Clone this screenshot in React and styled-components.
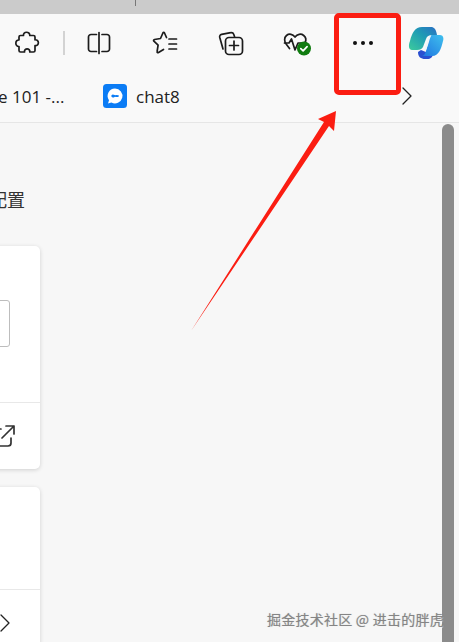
import React from 'react'
import styled, { createGlobalStyle } from 'styled-components'

const Global = createGlobalStyle`
  html, body { margin: 0; padding: 0; background: #f7f7f7; overflow: hidden; }
  body { font-family: 'Open Sans', 'Noto Sans CJK SC', sans-serif; }
`

const Page = styled.div`
  position: relative;
  width: 459px;
  height: 642px;
  overflow: hidden;
  display: flex;
  flex-direction: column;
`

const TopStrip = styled.div`
  height: 14px;
  flex: none;
  background: #cbcbcb;
  padding-left: 135px;
`

const Tick = styled.div`
  width: 1px;
  height: 6px;
  background: #777;
`

const Toolbar = styled.div`
  height: 64px;
  box-sizing: border-box;
  padding-bottom: 6px;
  flex: none;
  background: #f9f9f9;
  display: flex;
  align-items: center;
`

const ToolButton = styled.div`
  width: ${props => props.$w || 66}px;
  height: 100%;
  flex: none;
  display: flex;
  align-items: center;
  justify-content: center;
`

const Separator = styled.div`
  width: 2px;
  height: 24px;
  margin: 0 1px 0 9px;
  background: #d3d3d3;
`

const BookmarkBar = styled.div`
  height: 45px;
  box-sizing: border-box;
  padding-bottom: 8px;
  flex: none;
  background: #f9f9f9;
  border-bottom: 1px solid #e6e6e6;
  display: flex;
  align-items: center;
  font-size: 17px;
  color: #222;
`

const Bookmark = styled.div`
  display: flex;
  align-items: center;
  flex: none;
  gap: 9px;
  width: ${props => props.$w}px;
  margin-left: ${props => props.$ml}px;
  white-space: nowrap;
`

const More = styled.div`
  margin-left: 219px;
  display: flex;
`

const Content = styled.div`
  flex: 1;
  min-height: 0;
  display: flex;
  background: #f7f7f7;
`

const Column = styled.div`
  width: 442px;
  flex: none;
  overflow: hidden;
`

const Heading = styled.h2`
  margin: 64px 0 0 -11px;
  height: 59px;
  font: 400 18px/25px 'Noto Sans CJK SC', sans-serif;
  color: #333;
`

const Card = styled.section`
  width: 240px;
  margin: 0 0 18px -200px;
  background: #fff;
  border-radius: 5px;
  box-shadow: 0 1px 4px rgba(0, 0, 0, 0.16);
`

const CardBody = styled.div`
  height: ${props => props.$h}px;
  padding: 54px 30px 0 0;
  box-sizing: border-box;
`

const InputBox = styled.div`
  height: 47px;
  box-sizing: border-box;
  border: 1px solid #bdbdbd;
  border-radius: 3px;
`

const CardFooter = styled.div`
  height: 67px;
  border-top: 1px solid #e8e8e8;
  box-sizing: border-box;
  display: flex;
  align-items: center;
  justify-content: flex-end;
  padding-right: ${props => props.$pr}px;
`

const Scrollbar = styled.div`
  width: 12px;
  flex: none;
  margin-top: 1px;
  background: #8b8b8b;
  border-radius: 6px 6px 0 0;
`

const Highlight = styled.div`
  position: absolute;
  left: 334px;
  top: 13px;
  width: 67px;
  height: 82px;
  box-sizing: border-box;
  border: 5px solid #fb1d12;
  border-radius: 5px;
`

const Arrow = styled.svg`
  position: absolute;
  left: 0;
  top: 0;
`

const Watermark = styled.div`
  position: absolute;
  right: 15px;
  top: 609px;
  font: 400 14px/20px 'Noto Sans CJK SC', sans-serif;
  letter-spacing: 0.25px;
  color: #858585;
  white-space: nowrap;
  text-shadow: 0 0 1px rgba(120, 120, 120, 0.5), 0 1px 1px rgba(255, 255, 255, 0.8);
`

const stroke = { fill: 'none', stroke: '#1c1c1c', strokeWidth: 1.7, strokeLinecap: 'round', strokeLinejoin: 'round' }

const Puzzle = () => (
  <svg width="26" height="26" viewBox="0 0 26 26" {...stroke}>
    <path d="M9.500 5.500C8.800 1.300 16 1 15.800 5.500H19.500C20.500 5.500 21 6 21 7V9.800C25.500 9.200 25.500 16.200 21 15.600V20.500C21 21.500 20.500 22 19.500 22H15.800C16.300 17.800 10 17.800 10.500 22H6.500C5.500 22 5 21.500 5 20.500V16.500C.8 16.800 .8 9.600 5 10V7C5 6 5.500 5.500 6.500 5.500z" />
  </svg>
)

const Split = () => (
  <svg width="26" height="26" viewBox="0 0 26 26" {...stroke}>
    <path d="M10.500 4.500H5a2.500 2.500 0 0 0-2.500 2.500v12A2.500 2.500 0 0 0 5 21.500h5.500" />
    <path d="M16 4.500h5A2.500 2.500 0 0 1 23.500 7v12a2.500 2.500 0 0 1-2.500 2.500h-5" />
    <path d="M13 2.500v21" />
  </svg>
)

const Favorites = () => (
  <svg width="26" height="26" viewBox="0 0 26 26" {...stroke}>
    <path d="M14.500 7.500L12.500 3c-.4-.8-1.200-.8-1.600 0L8.500 8.500 2.500 9.500c-1 .2-1.200 1-.6 1.700l4.200 4-1 6.300c-.2 1 .6 1.500 1.400 1l5-3" />
    <path d="M17 9h7.500M17 14h7.500M17 19h7.500" />
  </svg>
)

const Collections = () => (
  <svg width="26" height="26" viewBox="0 0 26 26" {...stroke}>
    <path d="M16.500 6.500L15.700 4.300a2.500 2.500 0 0 0-3-1.600L3.600 4.300A2.500 2.500 0 0 0 1.700 7.300L5 19" />
    <rect x="7.500" y="7.500" width="17" height="17" rx="3.500" />
    <path d="M16 11v9M11.500 15.500h9" />
  </svg>
)

const Health = () => (
  <svg width="30" height="30" viewBox="0 0 30 30">
    <path {...stroke} d="M7.500 20.500L4.500 16.500C2 13.500 2 9.500 4.500 7.500c2.700-2.200 6.200-1.500 8.500 1.500 2.300-3 6-3.700 8.700-1.500 2 1.700 2.700 4.500 1.300 7" />
    <path {...stroke} d="M2.500 15h4.500l2.500-4 3.500 11 3-7h3" />
    <circle cx="22" cy="20.500" r="7" fill="#107c10" />
    <path d="M18.800 20.700l2.300 2.200 4-4.300" fill="none" stroke="#fff" strokeWidth="1.700" strokeLinecap="round" strokeLinejoin="round" />
  </svg>
)

const Dots = () => (
  <svg width="20" height="4" viewBox="0 0 20 4" fill="#111">
    <circle cx="2" cy="2" r="2" />
    <circle cx="10" cy="2" r="2" />
    <circle cx="18" cy="2" r="2" />
  </svg>
)

const Copilot = () => (
  <svg width="38" height="34" viewBox="0 0 38 34">
    <defs>
      <linearGradient id="cpA" x1="0" y1="1" x2="1" y2="0">
        <stop offset="0" stopColor="#3dcb9c" />
        <stop offset="0.55" stopColor="#1f9cb4" />
        <stop offset="1" stopColor="#2a6fc4" />
      </linearGradient>
      <linearGradient id="cpB" x1="0" y1="1" x2="1" y2="0">
        <stop offset="0" stopColor="#1f74e0" />
        <stop offset="1" stopColor="#3fc0ee" />
      </linearGradient>
    </defs>
    <path fill="#2a4fd0" d="M11 26C11 31 14 33 18 33H20C24 33 25 31 26 29L14 24z" />
    <path fill="url(#cpB)" d="M25 9H33C36 9 37 12 36 15C34 23 32 30 25 30H14C17 30 18 28 19 25L22 13C23 10 24 9 25 9z" />
    <path fill="url(#cpA)" d="M3 15C5 7 8 1 15 1H24C27 1 29 3 30 9H25C22 9 20 10 19 13L16 21C15 23 13 24 10 24H5C2 24 1 20 3 15z" />
    <path fill="#eef6fa" d="M23 10c-3 3-4 10-6 14h2c2-3 3-10 5-14z" />
  </svg>
)

const Chat8 = () => (
  <svg width="24" height="24" viewBox="0 0 24 24">
    <rect width="24" height="24" rx="3.500" fill="#0b7cf5" />
    <path fill="#fff" d="M12 4.500a7.500 7.500 0 1 1-3.600 14.100L5 19.500l1-3.200A7.500 7.500 0 0 1 12 4.500z" />
    <path d="M9 11.600c1-1 2 0 3 .4 1 .4 2 1 3-.4M9 12.400c1 1 2 0 3-.4 1-.4 2-1 3 .4" fill="none" stroke="#0b7cf5" strokeWidth="1.300" strokeLinecap="round" />
  </svg>
)

const Chevron = ({ w, h }) => (
  <svg width={w} height={h} viewBox="0 0 10 18" fill="none" stroke="#222" strokeWidth="1.300" strokeLinecap="round" strokeLinejoin="round">
    <path d="M1 1l8 8-8 8" />
  </svg>
)

const ExternalLink = () => (
  <svg width="24" height="24" viewBox="0 0 24 24" fill="none" stroke="#333" strokeWidth="1.700" strokeLinecap="round" strokeLinejoin="round">
    <path d="M10 5H4a3 3 0 0 0-3 3v11a3 3 0 0 0 3 3h13a3 3 0 0 0 3-3v-5" />
    <path d="M11 14L23 2M15 2h8v8" />
  </svg>
)

const App = () => (
  <Page>
    <Global />
    <TopStrip><Tick /></TopStrip>
    <Toolbar>
      <ToolButton $w={54}><Puzzle /></ToolButton>
      <Separator />
      <ToolButton><Split /></ToolButton>
      <ToolButton><Favorites /></ToolButton>
      <ToolButton><Collections /></ToolButton>
      <ToolButton><Health /></ToolButton>
      <ToolButton><Dots /></ToolButton>
      <ToolButton $w={60}><Copilot /></ToolButton>
    </Toolbar>
    <BookmarkBar>
      <Bookmark $w={105} $ml={-2}>e 101 -...</Bookmark>
      <Bookmark $w={80}><Chat8 />chat8</Bookmark>
      <More><Chevron w={10} h={18} /></More>
    </BookmarkBar>
    <Content>
      <Column>
        <Heading>配置</Heading>
        <Card>
          <CardBody $h={156}><InputBox /></CardBody>
          <CardFooter $pr={25}><ExternalLink /></CardFooter>
        </Card>
        <Card>
          <CardBody $h={102} />
          <CardFooter $pr={30}><Chevron w={10} h={18} /></CardFooter>
        </Card>
      </Column>
      <Scrollbar />
    </Content>
    <Highlight />
    <Arrow width="459" height="642" viewBox="0 0 459 642">
      <polygon fill="#fb1d12" points="191,331 324,122 318,119 336,111 334,131 329,126" />
    </Arrow>
    <Watermark>掘金技术社区 @ 进击的胖虎</Watermark>
  </Page>
)

export default App
